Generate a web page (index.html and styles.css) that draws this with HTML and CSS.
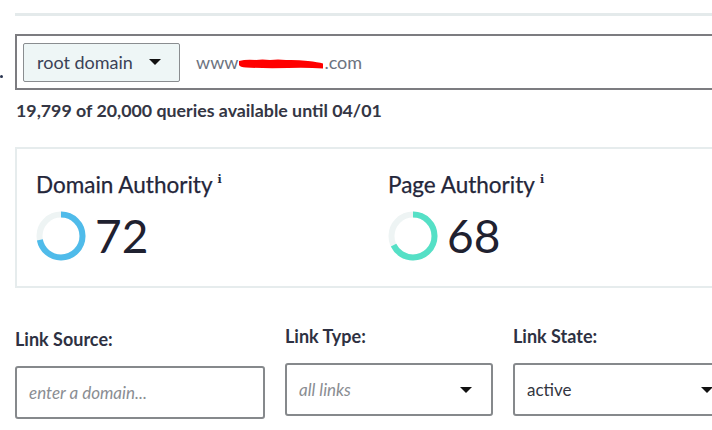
FILE: index.html
```html
<!DOCTYPE html>
<html>
<head>
<meta charset="utf-8">
<link rel="stylesheet" href="styles.css">
</head>
<body>
<div class="page">
  <span class="dot"></span>
  <div class="rule"></div>
  <div class="search">
    <div class="scope">
      <span>root domain</span>
      <span class="caret"></span>
    </div>
    <div class="url">www<svg class="redact" width="86" height="10" viewBox="0 0 86 10"><path d="M1 2 Q8 0 18 1 Q24 0 32 1 Q40 0 48 1 Q58 0.5 70 2 Q80 3 85 4.5 L85 9.5 Q70 8.5 50 9 Q25 9.5 8 8.5 Q2 8 1 6 Z" fill="#ff0000"/></svg>.com</div>
  </div>
  <p class="quota">19,799 of 20,000 queries available until 04/01</p>
  <div class="card">
    <div class="metric">
      <h2 class="metric-title">Domain Authority<sup>i</sup></h2>
      <div class="metric-value">
        <svg class="gauge" width="50" height="50" viewBox="0 0 50 50">
          <circle cx="25" cy="25" r="21.5" fill="none" stroke="#eef4f4" stroke-width="6"/>
          <circle cx="25" cy="25" r="21.5" fill="none" stroke="#4fbbea" stroke-width="6" pathLength="100" stroke-dasharray="72 100" transform="rotate(-90 25 25)"/>
        </svg>
        <span class="num">72</span>
      </div>
    </div>
    <div class="metric">
      <h2 class="metric-title">Page Authority<sup>i</sup></h2>
      <div class="metric-value">
        <svg class="gauge" width="50" height="50" viewBox="0 0 50 50">
          <circle cx="25" cy="25" r="21.5" fill="none" stroke="#eef4f4" stroke-width="6"/>
          <circle cx="25" cy="25" r="21.5" fill="none" stroke="#55e0c6" stroke-width="6" pathLength="100" stroke-dasharray="68 100" transform="rotate(-90 25 25)"/>
        </svg>
        <span class="num">68</span>
      </div>
    </div>
  </div>
  <div class="filters">
    <div class="field field-source">
      <label class="label">Link Source:</label>
      <div class="box"><span class="placeholder">enter a domain...</span></div>
    </div>
    <div class="field field-type">
      <label class="label">Link Type:</label>
      <div class="box select"><span class="placeholder">all links</span><span class="caret"></span></div>
    </div>
    <div class="field field-state">
      <label class="label">Link State:</label>
      <div class="box select"><span class="value">active</span><span class="caret"></span></div>
    </div>
  </div>
</div>
</body>
</html>
```
FILE: styles.css
```css
html, body {
  margin: 0;
  padding: 0;
  background: #ffffff;
  overflow: hidden;
  font-family: Lato, "Open Sans", sans-serif;
  color: #2d3040;
}
.page {
  position: relative;
  width: 760px;
  padding: 13px 0 0 15px;
}
.dot {
  position: absolute;
  left: 0;
  top: 75px;
  width: 3px;
  height: 3px;
  border-radius: 50%;
  background: #2a3550;
}
.rule {
  height: 3px;
  background: #e4eaeb;
}
.search {
  margin-top: 18px;
  height: 52px;
  border: 2px solid #7c7c80;
  display: flex;
  align-items: center;
  padding-left: 6px;
}
.scope {
  box-sizing: border-box;
  width: 157px;
  height: 39px;
  border: 1px solid #8a8d90;
  border-radius: 2px;
  background: #eef6f6;
  display: flex;
  align-items: center;
  justify-content: space-between;
  padding: 0 18px 0 13px;
  font-size: 18px;
  color: #3a4256;
}
.caret {
  width: 0;
  height: 0;
  border-left: 6px solid transparent;
  border-right: 6px solid transparent;
  border-top: 6px solid #111;
}
.url {
  margin-left: 16px;
  font-size: 18px;
  color: #6d7380;
  display: flex;
  align-items: center;
}
.redact {
  margin: 3px 0 0 0;
}
.quota {
  margin: 9px 0 0 1px;
  font-size: 17.8px;
  line-height: 22px;
  font-weight: 700;
  color: #343644;
}
.card {
  margin-top: 26px;
  border: 2px solid #e6eced;
  display: grid;
  grid-template-columns: 352px 1fr;
  padding: 18px 0 25px 19px;
}
.metric-title {
  margin: 0;
  font-size: 22.5px;
  line-height: 26px;
  font-weight: 400;
  color: #24263a;
  -webkit-text-stroke: 0.25px #24263a;
}
.metric-title sup {
  font-family: "DejaVu Serif", serif;
  font-size: 11px;
  font-weight: 700;
  margin-left: 5px;
  vertical-align: 10px;
  -webkit-text-stroke: 0;
}
.metric-value {
  display: flex;
  align-items: center;
  margin-top: 13px;
}
.gauge {
  display: block;
}
.num {
  margin-left: 9px;
  font-size: 46px;
  line-height: 50px;
  color: #1f2130;
}
.filters {
  margin-top: 37px;
  display: flex;
  gap: 20px;
}
.field {
  display: flex;
  flex-direction: column;
}
.field-source { width: 250px; margin-top: 3px; }
.field-type { width: 208px; }
.field-state { width: 240px; }
.label {
  font-size: 18px;
  font-weight: 700;
  line-height: 22px;
  color: #2e3142;
}
.box {
  box-sizing: border-box;
  margin-top: 16px;
  height: 53px;
  border: 2px solid #86898c;
  border-radius: 3px;
  display: flex;
  align-items: center;
  padding: 0 19px 0 12px;
}
.select {
  justify-content: space-between;
}
.field-state .box {
  width: 208px;
  padding-right: 6px;
}
.placeholder {
  font-size: 17px;
  font-style: italic;
  color: #8a8d92;
}
.value {
  font-size: 17px;
  color: #33363f;
}
```
